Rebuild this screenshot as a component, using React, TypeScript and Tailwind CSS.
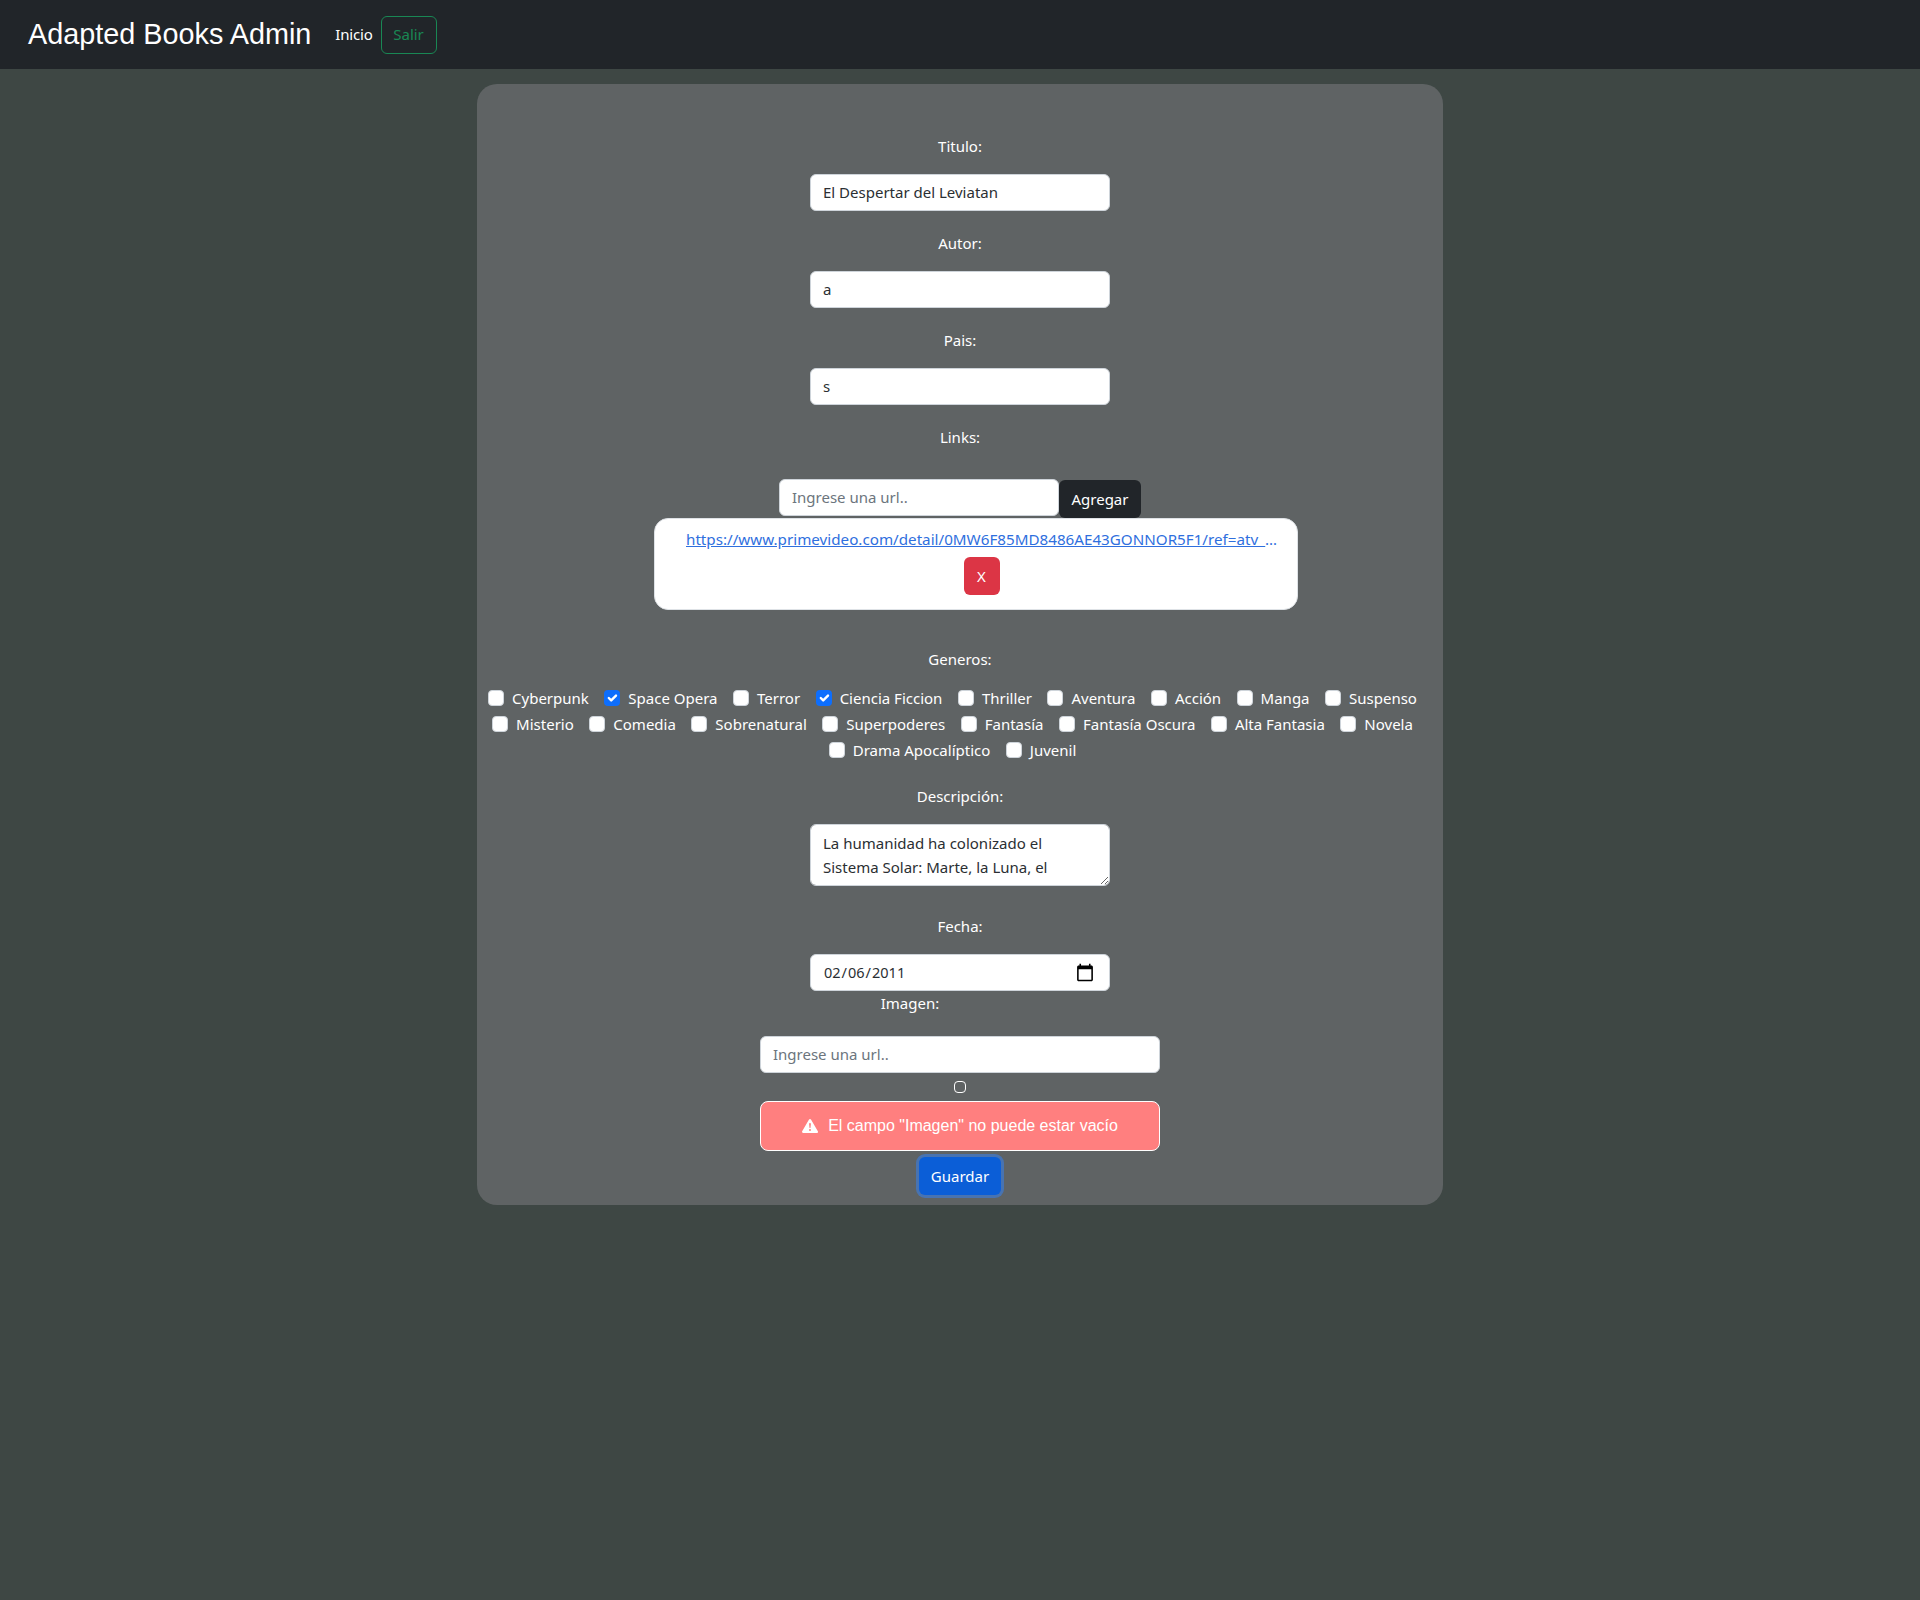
const font = "font-['Noto_Sans',sans-serif]";

const generos: [string, boolean][] = [
  ['Cyberpunk', false],
  ['Space Opera', true],
  ['Terror', false],
  ['Ciencia Ficcion', true],
  ['Thriller', false],
  ['Aventura', false],
  ['Acción', false],
  ['Manga', false],
  ['Suspenso', false],
  ['Misterio', false],
  ['Comedia', false],
  ['Sobrenatural', false],
  ['Superpoderes', false],
  ['Fantasía', false],
  ['Fantasía Oscura', false],
  ['Alta Fantasia', false],
  ['Novela', false],
  ['Drama Apocalíptico', false],
  ['Juvenil', false],
];

function Genero({ name, checked }: { name: string; checked: boolean }) {
  return (
    <label className="flex h-[26px] items-center gap-2 text-[15px] text-white">
      {checked ? (
        <span className="flex h-4 w-4 items-center justify-center rounded-[4px] bg-[#0d6efd]">
          <svg viewBox="0 0 20 20" className="h-4 w-4" fill="none" stroke="#fff" strokeLinecap="round" strokeLinejoin="round" strokeWidth="3">
            <path d="m6 10 3 3 6-6" />
          </svg>
        </span>
      ) : (
        <span className="h-4 w-4 rounded-[4px] border border-[#ced4da] bg-white" />
      )}
      {name}
    </label>
  );
}

function Label({ children, className = '' }: { children: string; className?: string }) {
  return <div className={`h-6 text-[15px] leading-6 text-white ${className}`}>{children}</div>;
}

const inputClass =
  'h-[37px] rounded-md border border-[#ced4da] bg-white px-3 pb-[2px] text-[15px] text-[#2b2f33] outline-none placeholder:text-[#6c757d]';

export default function App() {
  return (
    <div className={`relative min-h-[1600px] overflow-hidden bg-[#3e4744] ${font}`}>
      <nav className="flex h-[69px] items-center bg-[#212529] pl-[28px]">
        <span className="font-['Liberation_Sans',sans-serif] text-[28.8px] text-white">Adapted Books Admin</span>
        <span className="ml-[24px] text-[15px] tracking-[-0.2px] text-white">Inicio</span>
        <button className="ml-[8px] h-[38px] w-[56px] rounded-md border border-[#198754] text-[15px] text-[#198754]">Salir</button>
      </nav>

      <span className="absolute -left-[7px] top-[1205px] text-[16px] text-[#212529]">)</span>

      <main className="mx-auto mt-[15px] flex h-[1121px] w-[966px] flex-col items-center rounded-[20px] bg-[#5f6364] pt-[50px]">
        <Label>Titulo:</Label>
        <input className={`mt-[16px] w-[300px] ${inputClass}`} defaultValue="El Despertar del Leviatan" />
        <Label className="mt-[20px]">Autor:</Label>
        <input className={`mt-[16px] w-[300px] ${inputClass}`} defaultValue="a" />
        <Label className="mt-[20px]">Pais:</Label>
        <input className={`mt-[16px] w-[300px] ${inputClass}`} defaultValue="s" />
        <Label className="mt-[20px]">Links:</Label>

        <div className="mt-[30px] flex w-[362px] items-start self-center">
          <input className={`w-[280px] ${inputClass}`} placeholder="Ingrese una url.." />
          <button className="mt-px h-[38px] w-[82px] rounded-md bg-[#212529] text-[15px] text-white">Agregar</button>
        </div>

        <div className="ml-[32px] flex h-[92px] w-[644px] flex-col items-center rounded-[14px] border border-[#dee2e6] bg-white pl-[31px] pr-[18px] pt-[8px]">
          <div className="flex w-full text-[15.2px] leading-6">
            <a className="min-w-0 truncate text-[#2f6fde] underline" href="#">
              https://www.primevideo.com/detail/0MW6F85MD8486AE43GONNOR5F1/ref=atv_dp_share_cu_r
            </a>
          </div>
          <button className="mr-[2px] mt-[6px] h-[38px] w-[36px] rounded-md bg-[#dc3545] text-[15px] text-white">X</button>
        </div>

        <Label className="mt-[37px]">Generos:</Label>
        <div className="mr-[15px] mt-[14px] flex w-[950px] flex-wrap justify-center gap-x-[15.5px]">
          {generos.map(([name, checked]) => (
            <Genero key={name} name={name} checked={checked} />
          ))}
        </div>

        <Label className="mt-[21px]">Descripción:</Label>
        <textarea
          className="mt-[16px] h-[62px] w-[300px] rounded-md border border-[#ced4da] bg-white px-3 py-[6px] text-[15px] leading-6 text-[#2b2f33] outline-none"
          defaultValue="La humanidad ha colonizado el Sistema Solar: Marte, la Luna, el cinturón de asteroides"
        />
        <Label className="mt-[28px]">Fecha:</Label>
        <input
          type="date"
          className={`mt-[16px] w-[300px] !pb-0 !text-[14.5px] [&::-webkit-calendar-picker-indicator]:h-5 [&::-webkit-calendar-picker-indicator]:w-5 ${inputClass}`}
          defaultValue="2011-02-06"
        />
        <Label className="mr-[100px]">Imagen:</Label>
        <input className={`mt-[21px] w-[400px] ${inputClass}`} placeholder="Ingrese una url.." />
        <span className="mt-[8px] h-3 w-3 rounded-[4px] border border-white" />
        <div className="mt-[8px] flex h-[50px] w-[400px] items-center justify-center gap-[10px] rounded-lg border border-white bg-[#ff7f7f] font-['Liberation_Sans',sans-serif] text-base text-white">
          <svg viewBox="0 0 16 16" className="h-4 w-4" fill="currentColor">
            <path d="M8.98 1.56a1.13 1.13 0 0 0-1.96 0L.165 13.233c-.457.778.091 1.767.98 1.767h13.713c.889 0 1.438-.99.98-1.767zM8 5c.535 0 .954.462.9.995l-.35 3.507a.552.552 0 0 1-1.1 0L7.1 5.995A.905.905 0 0 1 8 5m.002 6a1 1 0 1 1 0 2 1 1 0 0 1 0-2" />
          </svg>
          El campo "Imagen" no puede estar vacío
        </div>
        <button className="mt-[6px] h-[38px] w-[82px] rounded-md bg-[#0b5ed7] text-[15px] text-white ring-3 ring-[#3184fd]/50">Guardar</button>
      </main>
    </div>
  );
}
